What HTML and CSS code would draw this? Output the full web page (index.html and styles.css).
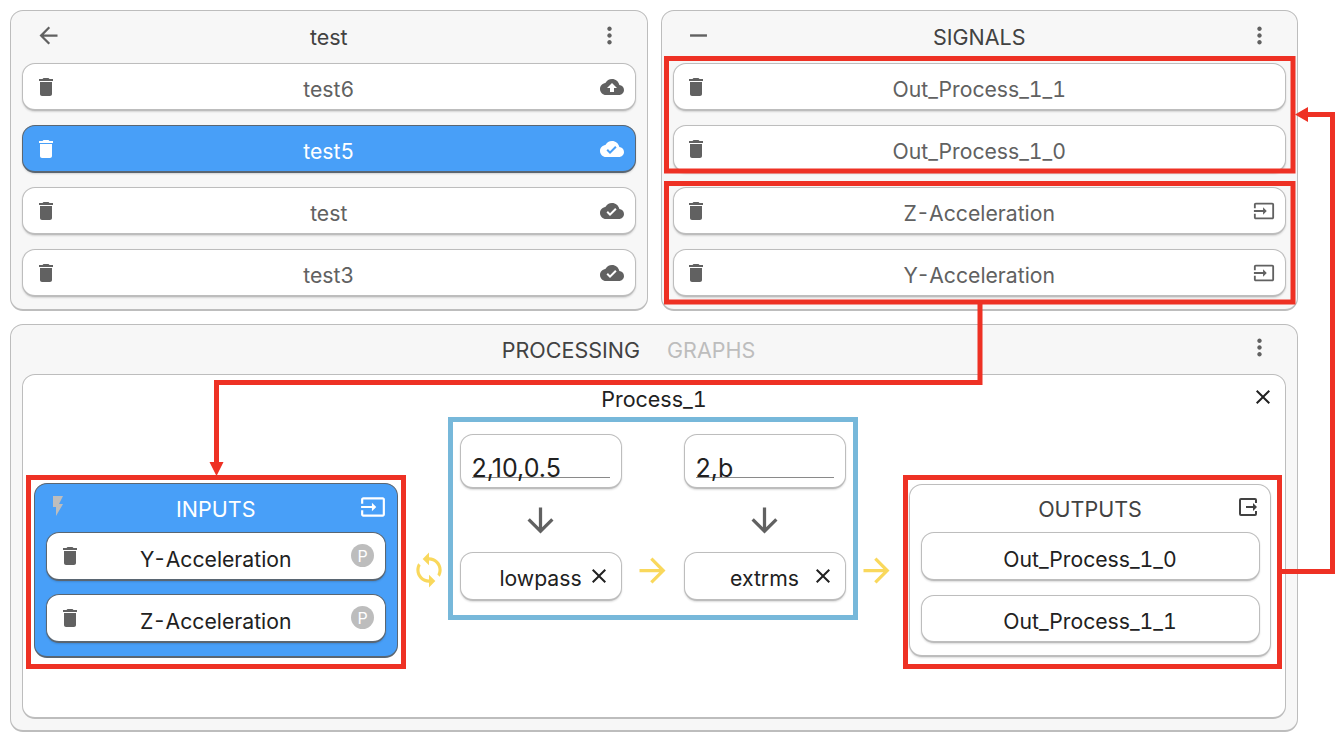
FILE: index.html
```html
<!DOCTYPE html>
<html lang="en">
<head>
<meta charset="utf-8">
<title>Processing</title>
<link rel="stylesheet" href="styles.css">
</head>
<body>
<svg class="defs" width="0" height="0" aria-hidden="true">
  <symbol id="i-delete" viewBox="0 0 24 24"><path d="M6 19c0 1.1.9 2 2 2h8c1.1 0 2-.9 2-2V7H6v12zM19 4h-3.5l-1-1h-5l-1 1H5v2h14V4z"/></symbol>
  <symbol id="i-upload" viewBox="0 0 24 24"><path d="M19.35 10.04C18.67 6.59 15.64 4 12 4 9.11 4 6.6 5.64 5.35 8.04 2.34 8.36 0 10.91 0 14c0 3.31 2.69 6 6 6h13c2.76 0 5-2.24 5-5 0-2.64-2.05-4.78-4.65-4.96zM14 13v4h-4v-4H7l5-5 5 5h-3z"/></symbol>
  <symbol id="i-done" viewBox="0 0 24 24"><path d="M19.35 10.04C18.67 6.59 15.64 4 12 4 9.11 4 6.6 5.64 5.35 8.04 2.34 8.36 0 10.91 0 14c0 3.31 2.69 6 6 6h13c2.76 0 5-2.24 5-5 0-2.64-2.05-4.78-4.65-4.96zM10 17l-3.5-3.5 1.41-1.41L10 14.17 15.18 9l1.41 1.41L10 17z"/></symbol>
  <symbol id="i-input" viewBox="0 0 24 24"><path d="M21 3.01H3c-1.1 0-2 .9-2 2V9h2V4.99h18v14.03H3V15H1v4.01c0 1.1.9 1.98 2 1.98h18c1.1 0 2-.88 2-1.98v-14c0-1.11-.9-2-2-2zM11 16l4-4-4-4v3H1v2h10v3z"/></symbol>
  <symbol id="i-output" viewBox="0 0 24 24"><path d="M5 3h14a2 2 0 0 1 2 2v3h-2V5H5v14h14v-3h2v3a2 2 0 0 1-2 2H5a2 2 0 0 1-2-2V5a2 2 0 0 1 2-2zM17 8l4 4-4 4v-3h-7v-2h7z"/></symbol>
  <symbol id="i-back" viewBox="0 0 24 24"><path d="M20 11H7.83l5.59-5.59L12 4l-8 8 8 8 1.41-1.41L7.83 13H20v-2z"/></symbol>
  <symbol id="i-forward" viewBox="0 0 24 24"><path d="M12 4l-1.41 1.41L16.17 11H4v2h12.17l-5.58 5.59L12 20l8-8z"/></symbol>
  <symbol id="i-down" viewBox="0 0 24 24"><path d="M20 12l-1.41-1.41L13 16.17V4h-2v12.17l-5.58-5.59L4 12l8 8 8-8z"/></symbol>
  <symbol id="i-more" viewBox="0 0 24 24"><path d="M12 8c1.1 0 2-.9 2-2s-.9-2-2-2-2 .9-2 2 .9 2 2 2zm0 2c-1.1 0-2 .9-2 2s.9 2 2 2 2-.9 2-2-.9-2-2-2zm0 6c-1.1 0-2 .9-2 2s.9 2 2 2 2-.9 2-2-.9-2-2-2z"/></symbol>
  <symbol id="i-remove" viewBox="0 0 24 24"><path d="M19 13H5v-2h14v2z"/></symbol>
  <symbol id="i-flash" viewBox="0 0 24 24"><path d="M7 2v11h3v9l7-12h-4l4-8z"/></symbol>
  <symbol id="i-sync" viewBox="0 0 24 24"><path d="M12 4V1L8 5l4 4V6c3.31 0 6 2.69 6 6 0 1.01-.25 1.97-.7 2.8l1.46 1.46C19.54 15.03 20 13.57 20 12c0-4.42-3.58-8-8-8zm0 14c-3.31 0-6-2.69-6-6 0-1.01.25-1.97.7-2.8L5.24 7.74C4.46 8.97 4 10.43 4 12c0 4.42 3.58 8 8 8v3l4-4-4-4v3z"/></symbol>
  <symbol id="i-close" viewBox="0 0 24 24"><path d="M19 6.41L17.59 5 12 10.59 6.41 5 5 6.41 10.59 12 5 17.59 6.41 19 12 13.41 17.59 19 19 17.59 13.41 12z"/></symbol>
</svg>

<main class="page">
  <div class="top">
    <section class="panel list-panel">
      <header class="panel-head">
        <svg class="icon head-left"><use href="#i-back"/></svg>
        <h2 class="title">test</h2>
        <svg class="icon more"><use href="#i-more"/></svg>
      </header>
      <div class="row"><svg class="icon trash"><use href="#i-delete"/></svg><span class="label">test6</span><svg class="icon status"><use href="#i-upload"/></svg></div>
      <div class="row selected"><svg class="icon trash"><use href="#i-delete"/></svg><span class="label">test5</span><svg class="icon status"><use href="#i-done"/></svg></div>
      <div class="row"><svg class="icon trash"><use href="#i-delete"/></svg><span class="label">test</span><svg class="icon status"><use href="#i-done"/></svg></div>
      <div class="row"><svg class="icon trash"><use href="#i-delete"/></svg><span class="label">test3</span><svg class="icon status"><use href="#i-done"/></svg></div>
    </section>
    <section class="panel list-panel">
      <header class="panel-head">
        <svg class="icon head-minus"><use href="#i-remove"/></svg>
        <h2 class="title">SIGNALS</h2>
        <svg class="icon more"><use href="#i-more"/></svg>
      </header>
      <div class="row"><svg class="icon trash"><use href="#i-delete"/></svg><span class="label">Out_Process_1_1</span></div>
      <div class="row"><svg class="icon trash"><use href="#i-delete"/></svg><span class="label">Out_Process_1_0</span></div>
      <div class="row"><svg class="icon trash"><use href="#i-delete"/></svg><span class="label">Z-Acceleration</span><svg class="icon signal-in"><use href="#i-input"/></svg></div>
      <div class="row"><svg class="icon trash"><use href="#i-delete"/></svg><span class="label">Y-Acceleration</span><svg class="icon signal-in"><use href="#i-input"/></svg></div>
    </section>
  </div>

  <section class="panel process-panel">
    <header class="panel-head tabs-head">
      <div class="tabs"><span class="tab active">PROCESSING</span><span class="tab">GRAPHS</span></div>
      <svg class="icon more"><use href="#i-more"/></svg>
    </header>
    <div class="process">
      <div class="process-head">
        <h3 class="process-name">Process_1</h3>
        <svg class="icon close-big"><use href="#i-close"/></svg>
      </div>
      <div class="flow">
        <div class="io inputs">
          <div class="io-head">
            <svg class="icon flash"><use href="#i-flash"/></svg>
            <span class="io-title">INPUTS</span>
            <svg class="icon io-icon"><use href="#i-input"/></svg>
          </div>
          <div class="row dark"><svg class="icon trash"><use href="#i-delete"/></svg><span class="label">Y-Acceleration</span><span class="badge">P</span></div>
          <div class="row dark"><svg class="icon trash"><use href="#i-delete"/></svg><span class="label">Z-Acceleration</span><span class="badge">P</span></div>
        </div>
        <svg class="icon sync"><use href="#i-sync"/></svg>
        <div class="steps">
          <div class="step">
            <div class="param"><div class="param-line">2,10,0.5</div></div>
            <svg class="icon down"><use href="#i-down"/></svg>
            <div class="fn"><span class="fn-name">lowpass</span><svg class="icon fn-x"><use href="#i-close"/></svg></div>
          </div>
          <svg class="icon yarrow"><use href="#i-forward"/></svg>
          <div class="step">
            <div class="param"><div class="param-line">2,b</div></div>
            <svg class="icon down"><use href="#i-down"/></svg>
            <div class="fn"><span class="fn-name">extrms</span><svg class="icon fn-x"><use href="#i-close"/></svg></div>
          </div>
          <svg class="icon yarrow"><use href="#i-forward"/></svg>
        </div>
        <div class="io outputs">
          <div class="io-head">
            <span class="io-title">OUTPUTS</span>
            <svg class="icon io-icon"><use href="#i-output"/></svg>
          </div>
          <div class="row out"><span class="label">Out_Process_1_0</span></div>
          <div class="row out"><span class="label">Out_Process_1_1</span></div>
        </div>
      </div>
    </div>
  </section>
</main>

<svg class="annotations" width="1340" height="742" viewBox="0 0 1340 742" aria-hidden="true">
  <g class="red">
    <rect x="666.500" y="58.500" width="626.500" height="112.500"/>
    <rect x="666.500" y="183.500" width="626.500" height="118.500"/>
    <rect x="28.500" y="477.500" width="375" height="189"/>
    <rect x="905.500" y="477.500" width="374" height="189"/>
    <path d="M980 302V382.500H216.500V465"/>
    <path d="M1282 571.500H1332.500V114.500H1305"/>
  </g>
  <path class="red-fill" d="M209.500 462H223.500L216.500 476zM1295 114.500L1308 107V122z"/>
  <rect class="blue" x="450.500" y="419.500" width="405" height="198"/>
</svg>
</body>
</html>
```
FILE: styles.css
```css
* { box-sizing: border-box; }
html, body { margin: 0; height: 100%; background: #fff; overflow: hidden; }
body { font-family: "Inter", "Liberation Sans", sans-serif; font-feature-settings: "tnum"; color: #212121; position: relative; }
.defs { position: absolute; }
.page { width: 1340px; height: 742px; padding: 10px 42px 0 10px; display: flex; flex-direction: column; gap: 13px; }
.top { display: flex; gap: 13px; }
.panel { background: #f7f7f7; border: 1.500px solid #bdbdbd; border-bottom-width: 2.500px; border-radius: 13px; }
.list-panel { flex: 1 1 0; height: 301px; padding: 0 11px; display: flex; flex-direction: column; }
.panel-head { height: 51.500px; display: flex; align-items: center; justify-content: center; position: relative; flex: none; }
.title { margin: 0; font-size: 21.500px; font-weight: 400; color: #424242; line-height: 24px; }
.icon { width: 24px; height: 24px; fill: #616161; flex: none; }
.head-left { position: absolute; left: 12.500px; top: 11px; width: 27px; height: 27px; }
.head-minus { position: absolute; left: 11.500px; top: 9.500px; width: 29px; height: 29px; }
.more { position: absolute; right: 13px; top: 11px; width: 27px; height: 27px; }
.row { height: 48.500px; flex: none; background: #fff; border: 1.500px solid #bdbdbd; border-bottom-width: 2.500px; border-radius: 13px; display: flex; align-items: center; justify-content: center; position: relative; margin-bottom: 13.500px; box-shadow: 0 1px 2px rgba(0,0,0,.14); }
.label { font-size: 21.200px; color: #616161; line-height: 24px; position: relative; top: 3px; }
.trash { position: absolute; left: 10.500px; top: 11px; }
.status { position: absolute; right: 10.500px; top: 11px; }
.signal-in { position: absolute; right: 10.500px; top: 12.500px; width: 22px; height: 22px; }
.selected { background: #489ff8; border-color: #5a6672; }
.selected .label { color: #fff; }
.selected .trash, .selected .status { fill: #fff; }
.process-panel { height: 408px; padding: 0 11px; }
.tabs-head { height: 48.500px; padding-right: 51px; }
.tabs { display: flex; gap: 27px; font-size: 21.500px; line-height: 24px; position: relative; top: 1px; }
.tabs-head .more { top: 9px; }
.tab { color: #bdbdbd; }
.tab.active { color: #424242; }
.process { height: 345px; background: #fff; border: 1.500px solid #bdbdbd; border-bottom-width: 2.500px; border-radius: 13px; padding: 0 11px; }
.process-head { height: 49px; display: flex; justify-content: center; position: relative; }
.process-name { margin: 0; font-size: 21.500px; font-weight: 400; line-height: 24px; padding-top: 12px; color: #212121; }
.close-big { position: absolute; right: -0.500px; top: 10.500px; fill: #212121; }
.flow { display: flex; align-items: flex-start; margin-top: 10px; }
.io { border-radius: 13px; flex: none; display: flex; flex-direction: column; }
.inputs { width: 363.500px; height: 175px; margin-top: 49px; padding: 0 11px; background: #489ff8; border: 1.500px solid #5a6672; border-bottom-width: 2.500px; }
.outputs { width: 362px; height: 173px; margin: 50px 0 0 1.500px; padding: 0 10.500px; background: #fff; border: 1.500px solid #bdbdbd; border-bottom-width: 2.500px; box-shadow: 0 1px 2px rgba(0,0,0,.14); }
.io-head { height: 48.500px; flex: none; display: flex; align-items: center; justify-content: center; position: relative; }
.outputs .io-head { height: 47.500px; }
.io-title { font-size: 21.500px; line-height: 24px; position: relative; top: 1px; }
.inputs .io-title { color: #fff; }
.outputs .io-title { color: #424242; }
.flash { position: absolute; left: 0; top: 10.500px; fill: #bdbdbd; }
.io-icon { position: absolute; }
.inputs .io-icon { right: -0.500px; top: 10px; width: 26px; height: 26px; fill: #fff; }
.outputs .io-icon { right: -0.500px; top: 10.500px; fill: #424242; }
.row.dark { border-color: #5a6672; }
.row.dark .label, .row.out .label { color: #212121; }
.row.out { margin-bottom: 14px; }
.badge { position: absolute; right: 10.500px; top: 11px; width: 23px; height: 23px; border-radius: 50%; background: #bdbdbd; color: #fff; font-size: 16px; display: flex; align-items: center; justify-content: center; }
.sync { width: 38px; height: 38px; fill: #f9d85c; margin: 117.500px 0 0 12px; }
.steps { display: flex; align-items: flex-start; padding-left: 12px; flex: none; }
.step { width: 162px; display: flex; flex-direction: column; align-items: center; flex: none; }
.param { width: 162px; height: 55px; background: #fff; border: 1.500px solid #bdbdbd; border-bottom-width: 2.500px; border-radius: 13px; padding: 0 11px; display: flex; align-items: flex-end; box-shadow: 0 1px 2px rgba(0,0,0,.14); }
.param-line { width: 100%; height: 19px; font-size: 25px; font-feature-settings: normal; line-height: 18px; border-bottom: 1px solid #8a8a8a; margin-bottom: 9px; color: #212121; white-space: nowrap; }
.down { width: 39px; height: 39px; margin: 12px 0; }
.fn { width: 162px; height: 49px; background: #fff; border: 1.500px solid #bdbdbd; border-bottom-width: 2.500px; border-radius: 13px; display: flex; align-items: center; justify-content: center; position: relative; box-shadow: 0 1px 2px rgba(0,0,0,.14); }
.fn-name { font-size: 21.200px; line-height: 24px; position: relative; top: 2px; }
.fn-x { position: absolute; right: 10px; top: 11.500px; fill: #212121; }
.yarrow { width: 39px; height: 39px; fill: #f9d85c; margin: 117px 11.500px 0; }
.annotations { position: absolute; left: 0; top: 0; pointer-events: none; }
.red rect, .red path { fill: none; stroke: #ee3124; stroke-width: 5; }
.red-fill { fill: #ee3124; }
.blue { fill: none; stroke: #77b8da; stroke-width: 5; }
```
